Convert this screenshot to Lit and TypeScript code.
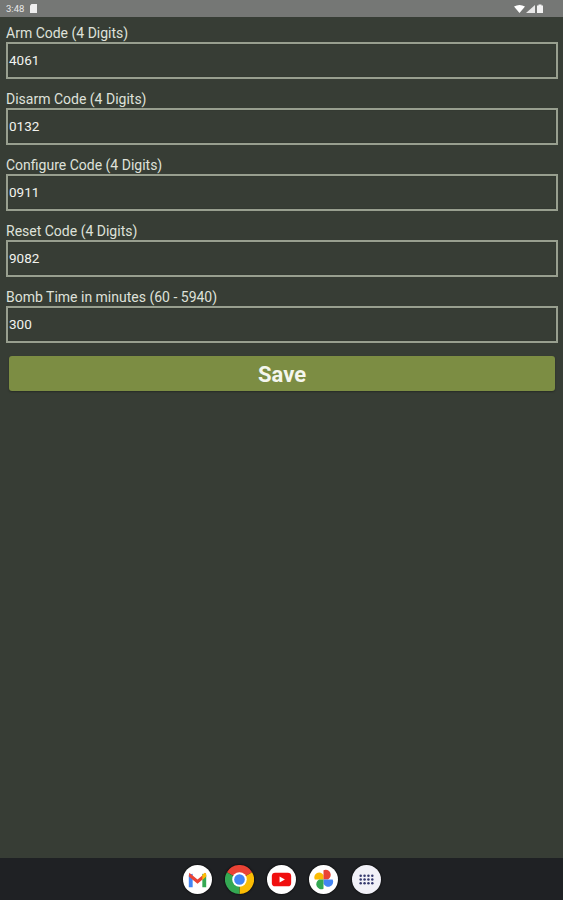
import { css, html, LitElement, svg } from "lit";
import { customElement, property } from "lit/decorators.js";

const FIELDS = [
  { label: "Arm Code (4 Digits)", value: "4061" },
  { label: "Disarm Code (4 Digits)", value: "0132" },
  { label: "Configure Code (4 Digits)", value: "0911" },
  { label: "Reset Code (4 Digits)", value: "9082" },
  { label: "Bomb Time in minutes (60 - 5940)", value: "300" },
];

@customElement("code-field")
export class CodeField extends LitElement {
  @property({ type: String })
  label = "";

  @property({ type: String })
  value = "";

  static styles = css`
    :host {
      display: block;
    }

    .label {
      height: 16px;
      font-size: 14px;
      line-height: 15px;
      white-space: nowrap;
      color: #dfe1da;
    }

    .box {
      box-sizing: border-box;
      height: 37px;
      padding-left: 1px;
      border: 2px solid #989f8f;
      box-shadow: inset 0 0 1px #23271f;
      font-size: 13.5px;
      line-height: 33px;
      color: #f2f3ef;
    }
  `;

  render() {
    return html`
      <div class="label">${this.label}</div>
      <div class="box">${this.value}</div>
    `;
  }
}

@customElement("app-root")
export class AppRoot extends LitElement {
  static styles = css`
    :host {
      display: flex;
      flex-direction: column;
      height: 900px;
      background: #373d35;
      font-family: Roboto, "Liberation Sans", sans-serif;
    }

    .status {
      display: flex;
      align-items: center;
      justify-content: space-between;
      flex: none;
      height: 17px;
      padding: 0 19px 0 6px;
      background: #757775;
      color: #e8e8e8;
      font-size: 9.5px;
    }

    .status-left,
    .status-right {
      display: flex;
      align-items: center;
      gap: 6px;
    }

    .status-right {
      gap: 1px;
    }

    .form {
      display: flex;
      flex: 1;
      flex-direction: column;
      gap: 13px;
      padding: 9px 5px 0 6px;
    }

    .save {
      display: flex;
      align-items: center;
      justify-content: center;
      box-sizing: border-box;
      height: 35px;
      margin: 0 3px;
      padding-top: 2px;
      border-radius: 3px;
      background: #7c8d43;
      box-shadow: 0 1px 2px rgba(0, 0, 0, 0.3);
      color: #f4f6ee;
      font-size: 22px;
      font-weight: 700;
    }

    .dock {
      display: flex;
      align-items: center;
      justify-content: center;
      flex: none;
      gap: 13.25px;
      height: 42px;
      background: #1f2124;
    }

    .dock svg {
      display: block;
      width: 29px;
      height: 29px;
      filter: drop-shadow(0 0 1px #000000);
    }
  `;

  private renderStatus() {
    return html`
      <div class="status">
        <div class="status-left">
          <span>3:48</span>
          <svg width="7" height="9" viewBox="0 0 7 9">
            <path d="M1.5 0H7v9H0V1.5Z" fill="#eeeeee"></path>
          </svg>
        </div>
        <div class="status-right">
          <svg width="11" height="8" viewBox="0 0 11 8">
            <path d="M0 1.5Q5.500-1.500 11 1.500L5.500 8Z" fill="#ffffff"></path>
          </svg>
          <svg width="9" height="8" viewBox="0 0 9 8">
            <path d="M9 0V8H0Z" fill="#e8e8e8"></path>
          </svg>
          <svg width="8" height="9" viewBox="0 0 8 9">
            <path d="M2.500 1.500V.5H5.500V1.500H7V9H1V1.500Z" fill="#f2f2f2"></path>
          </svg>
        </div>
      </div>
    `;
  }

  private renderGmail() {
    return svg`
      <svg viewBox="0 0 30 30">
        <circle cx="15" cy="15" r="15" fill="#ffffff"></circle>
        <path d="M6 23V10L10 9V23Z" fill="#4285f4"></path>
        <path d="M24 23V10L20 9V23Z" fill="#34a853"></path>
        <path d="M6.500 8 15 15 23.500 8 24 12 15 19.500 6 12Z" fill="#ea4335"></path>
        <path d="M20 10.500 22 8 24 9V12L20 15.500Z" fill="#fbbc04"></path>
      </svg>
    `;
  }

  private renderChrome() {
    return svg`
      <svg viewBox="0 0 30 30">
        <path d="M15 15 2 7.500A15 15 0 0 1 28 7.500Z" fill="#ea4335"></path>
        <path d="M15 15 28 7.500A15 15 0 0 1 15 30Z" fill="#fbbc04"></path>
        <path d="M15 15 15 30A15 15 0 0 1 2 7.500Z" fill="#34a853"></path>
        <circle cx="15" cy="15" r="7.500" fill="#ffffff"></circle>
        <circle cx="15" cy="15" r="5.500" fill="#4285f4"></circle>
      </svg>
    `;
  }

  private renderYoutube() {
    return svg`
      <svg viewBox="0 0 30 30">
        <circle cx="15" cy="15" r="15" fill="#ffffff"></circle>
        <rect x="5" y="8" width="20" height="14" rx="3.500" fill="#f00f0f"></rect>
        <path d="M13 12 18.500 15 13 18Z" fill="#ffffff"></path>
      </svg>
    `;
  }

  private renderPhotos() {
    return svg`
      <svg viewBox="0 0 30 30">
        <circle cx="15" cy="15" r="15" fill="#ffffff"></circle>
        <path d="M15 15H6A4.500 4.500 0 0 1 15 10.500Z" fill="#fbbc04"></path>
        <path d="M15 15V5.500A4.500 4.500 0 0 1 19.500 15Z" fill="#ea4335"></path>
        <path d="M15 15H24.500A4.500 4.500 0 0 1 15 19.500Z" fill="#4285f4"></path>
        <path d="M15 15V24.500A4.500 4.500 0 0 1 10.500 15Z" fill="#34a853"></path>
      </svg>
    `;
  }

  private renderApps() {
    const dots = [];
    for (const y of [11, 15, 19]) {
      for (const x of [9, 13, 17, 21]) {
        dots.push(svg`<circle cx="${x}" cy="${y}" r="1.300" fill="#34396e"></circle>`);
      }
    }
    return svg`
      <svg viewBox="0 0 30 30">
        <circle cx="15" cy="15" r="15" fill="#f1f1f8"></circle>
        ${dots}
      </svg>
    `;
  }

  render() {
    return html`
      ${this.renderStatus()}
      <div class="form">
        ${FIELDS.map(
          (f) => html`<code-field label="${f.label}" value="${f.value}"></code-field>`,
        )}
        <div class="save">Save</div>
      </div>
      <div class="dock">
        ${this.renderGmail()} ${this.renderChrome()} ${this.renderYoutube()}
        ${this.renderPhotos()} ${this.renderApps()}
      </div>
    `;
  }
}
